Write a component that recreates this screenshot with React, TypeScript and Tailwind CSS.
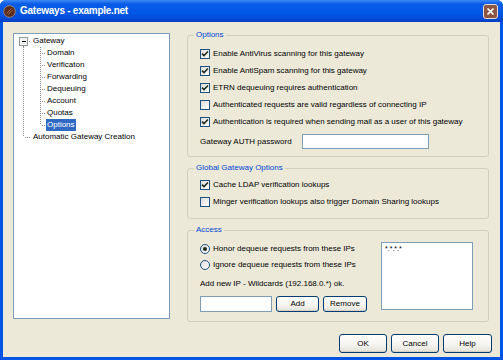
import React from "react";

/**
 * Gateways dialog (XP-style options page)
 */

const font = "font-['Liberation_Sans',Arial,sans-serif]";

const treeItems: { name: string; level: number; conn: string[]; selected?: boolean }[] = [
  { name: "Gateway", level: 0, conn: ["open"] },
  { name: "Domain", level: 1, conn: ["pipe", "tee"] },
  { name: "Verificaton", level: 1, conn: ["pipe", "tee"] },
  { name: "Forwarding", level: 1, conn: ["pipe", "tee"] },
  { name: "Dequeuing", level: 1, conn: ["pipe", "tee"] },
  { name: "Account", level: 1, conn: ["pipe", "tee"] },
  { name: "Quotas", level: 1, conn: ["pipe", "tee"] },
  { name: "Options", level: 1, conn: ["pipe", "ell"], selected: true },
  { name: "Automatic Gateway Creation", level: 0, conn: ["ell"] },
];

function Conn({ kind, w, x }: { kind: string; w: number; x: number }) {
  const dot = { stroke: "#8c8c8c", strokeWidth: 1, strokeDasharray: "1 1", shapeRendering: "crispEdges" as const };
  const lx = x + 0.5;
  return (
    <svg width={w} height={12} className="shrink-0">
      {kind === "pipe" && <line x1={lx} y1={0} x2={lx} y2={12} {...dot} />}
      {kind === "tee" && (
        <>
          <line x1={lx} y1={0} x2={lx} y2={12} {...dot} />
          <line x1={x + 2} y1={6.5} x2={w} y2={6.5} {...dot} />
        </>
      )}
      {kind === "ell" && (
        <>
          <line x1={lx} y1={0} x2={lx} y2={6} {...dot} />
          <line x1={x + 2} y1={6.5} x2={w} y2={6.5} {...dot} />
        </>
      )}
      {kind === "open" && (
        <>
          <line x1={lx} y1={11} x2={lx} y2={12} {...dot} />
          <line x1={x + 6} y1={6.5} x2={w} y2={6.5} {...dot} />
          <rect x={x - 3.5} y={2.5} width={8} height={8} fill="#f2f2ee" stroke="#919b9c" shapeRendering="crispEdges" />
          <line x1={x - 1} y1={6.5} x2={x + 3} y2={6.5} stroke="#000" shapeRendering="crispEdges" />
        </>
      )}
    </svg>
  );
}

function Check({ checked }: { checked?: boolean }) {
  return (
    <span className="flex h-[10px] w-[10px] shrink-0 items-center justify-center border border-[#1C5180] bg-[linear-gradient(135deg,#dcdcd7,#ffffff)]">
      {checked && (
        <svg width="8" height="8" viewBox="0 0 8 8">
          <path d="M1 3.6 L3 5.6 L7 1.4" stroke="#1c2a1c" strokeWidth="1.5" fill="none" />
        </svg>
      )}
    </span>
  );
}

function Radio({ checked }: { checked?: boolean }) {
  return (
    <span className="flex h-[10px] w-[10px] shrink-0 items-center justify-center rounded-full border border-[#1C5180] bg-[linear-gradient(135deg,#dcdcd7,#ffffff)]">
      {checked && <span className="h-[4px] w-[4px] rounded-full bg-[#1d2a1d]" />}
    </span>
  );
}

function Btn({ label, w }: { label: string; w: string }) {
  return (
    <button
      className={`${w} h-full rounded-[3px] border border-[#003C74] bg-[linear-gradient(180deg,#ffffff_0%,#f4f3ee_60%,#e3e1d8_100%)] text-[8px] leading-none text-black shadow-[inset_0_-1px_0_#d6d0c5]`}
    >
      {label}
    </button>
  );
}

function Group({ title, className, children }: { title: string; className?: string; children: React.ReactNode }) {
  return (
    <fieldset className={`rounded-[3px] border border-[#D0D0BF] ${className ?? ""}`}>
      <legend className="ml-[6px] h-[10px] px-[2px] leading-[10px] text-[#0046D5]">{title}</legend>
      {children}
    </fieldset>
  );
}

function CheckRow({ label, checked }: { label: string; checked?: boolean }) {
  return (
    <div className="flex h-[17px] items-center gap-[3px]">
      <Check checked={checked} />
      <span className="whitespace-nowrap">{label}</span>
    </div>
  );
}

export default function App() {
  return (
    <div className={`flex h-[360px] w-[503px] flex-col rounded-t-[6px] bg-[#0054E3] text-[8px] leading-[10px] text-black ${font}`}>
      {/* Title bar */}
      <div className="flex h-[22px] shrink-0 items-center rounded-t-[6px] bg-[linear-gradient(180deg,#3d8af7_0%,#0a5ce6_18%,#0058e6_60%,#0047d2_90%,#0040be_100%)] pl-[3px] pr-[5px]">
        <svg width="13" height="13" viewBox="0 0 13 13" className="shrink-0">
          <circle cx="6.5" cy="6.5" r="5.8" fill="#5a2c1c" stroke="#b08872" strokeWidth="0.9" />
          <path d="M3.6 8.4 L8.4 3.6 M5 9.6 L9.6 5" stroke="#a36a52" strokeWidth="1" />
        </svg>
        <span className="ml-[4px] text-[10px] font-bold tracking-[-0.25px] text-white">Gateways - example.net</span>
        <div className="ml-auto flex h-[15px] w-[15px] items-center justify-center rounded-[3px] border border-[#eadad2] bg-[#8c5544]">
          <svg width="9" height="9" viewBox="0 0 9 9">
            <path d="M1.5 1.5 L7.5 7.5 M7.5 1.5 L1.5 7.5" stroke="#fff" strokeWidth="1.7" />
          </svg>
        </div>
      </div>

      {/* Client area */}
      <div className="mx-[3px] mb-[3px] flex flex-1 flex-col bg-[#ECE9D8] pl-[10px] pt-[8px]">
        <div className="flex">
          {/* Tree */}
          <div className="mt-[3px] h-[286px] w-[157px] shrink-0 border border-[#7F9DB9] bg-white pt-[1px]">
            {treeItems.map((item) => (
              <div key={item.name} className="flex h-[12px] items-center">
                <Conn kind={item.conn[0]} w={17} x={9} />
                {item.level === 1 && <Conn kind={item.conn[1]} w={14} x={9} />}
                <span
                  className={
                    item.selected
                      ? "ml-[1px] bg-[#316AC5] px-[1px] leading-[12px] text-white"
                      : "ml-[2px] whitespace-nowrap leading-[12px]"
                  }
                >
                  {item.name}
                </span>
              </div>
            ))}
          </div>

          {/* Right column */}
          <div className="ml-[17px] flex w-[302px] flex-col">
            <Group title="Options">
              <div className="pb-[7px] pl-[12px] pt-[5px]">
                <CheckRow label="Enable AntiVirus scanning for this gateway" checked />
                <CheckRow label="Enable AntiSpam scanning for this gateway" checked />
                <CheckRow label="ETRN dequeuing requires authentication" checked />
                <CheckRow label="Authenticated requests are valid regardless of connecting IP" />
                <CheckRow label="Authentication is required when sending mail as a user of this gateway" checked />
                <div className="mt-[4px] flex h-[15px] items-center">
                  <span className="w-[102px]">Gateway AUTH password</span>
                  <div className="h-[15px] w-[127px] border border-[#7F9DB9] bg-white" />
                </div>
              </div>
            </Group>

            <Group title="Global Gateway Options" className="mt-[6px]">
              <div className="pb-[8px] pl-[12px] pt-[3px]">
                <CheckRow label="Cache LDAP verification lookups" checked />
                <CheckRow label="Minger verification lookups also trigger Domain Sharing lookups" />
              </div>
            </Group>

            <Group title="Access" className="mt-[6px]">
              <div className="flex pl-[12px]">
                <div className="flex flex-col pb-[9px] pt-[6px]">
                  <div className="flex h-[16px] items-center gap-[3px]">
                    <Radio checked />
                    <span>Honor dequeue requests from these IPs</span>
                  </div>
                  <div className="flex h-[16px] items-center gap-[3px]">
                    <Radio />
                    <span>Ignore dequeue requests from these IPs</span>
                  </div>
                  <div className="mt-[2px] flex h-[18px] items-center">Add new IP - Wildcards (192.168.0.*) ok.</div>
                  <div className="mt-[3px] flex h-[16px] gap-[4px]">
                    <div className="h-full w-[72px] border border-[#7F9DB9] bg-white" />
                    <Btn label="Add" w="w-[43px]" />
                    <Btn label="Remove" w="w-[44px]" />
                  </div>
                </div>
                <div className="ml-auto mr-[15px] mt-[7px] h-[68px] w-[92px] border border-[#7F9DB9] bg-white pl-[3px] pt-[2px] text-[7px] leading-[8px]">
                  *.*.*.*
                </div>
              </div>
            </Group>
          </div>
        </div>

        {/* Dialog buttons */}
        <div className="mt-[12px] flex h-[19px] justify-end gap-[4px] pr-[8px]">
          <Btn label="OK" w="w-[48px]" />
          <Btn label="Cancel" w="w-[48px]" />
          <Btn label="Help" w="w-[49px]" />
        </div>
      </div>
    </div>
  );
}
